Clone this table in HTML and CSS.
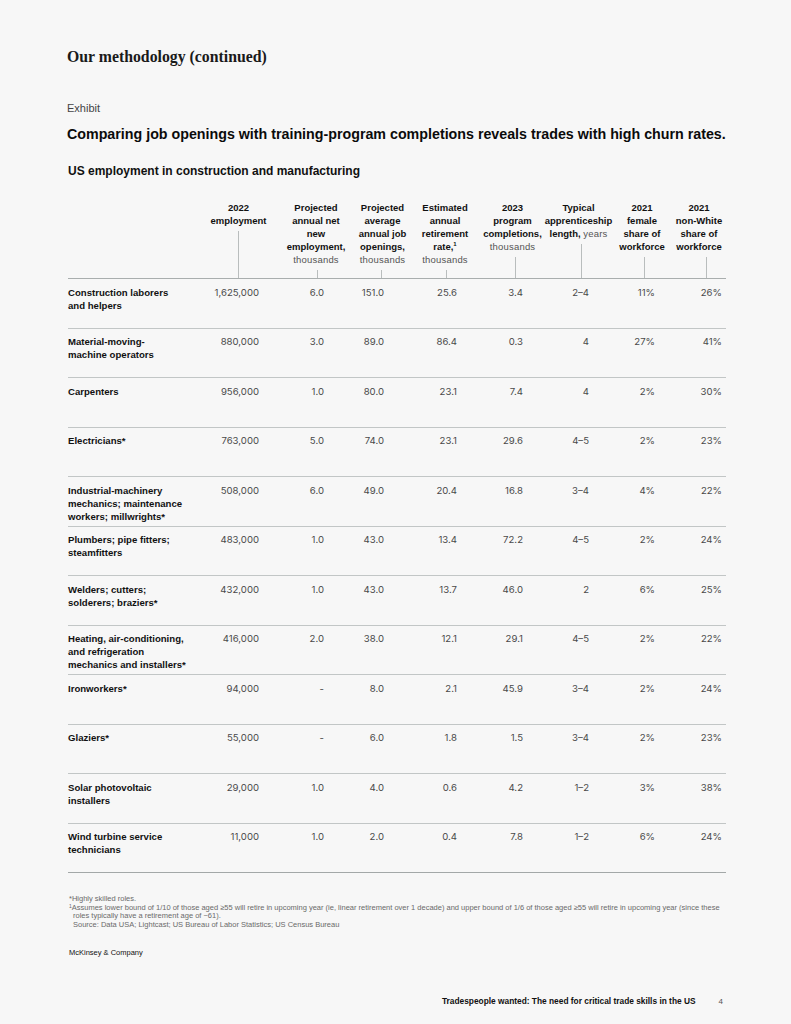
FILE: index.html
```html
<!DOCTYPE html>
<html lang="en">
<head>
<meta charset="utf-8">
<title>Our methodology (continued)</title>
<link rel="stylesheet" href="styles.css">
</head>
<body>
<div class="page">
  <h1 class="title">Our methodology (continued)</h1>
  <div class="exhibit">Exhibit</div>
  <h2 class="heading">Comparing job openings with training-program completions reveals trades with high churn rates.</h2>
  <h3 class="subtitle">US employment in construction and manufacturing</h3>

  <div class="table">
    <div class="thead">
      <div class="hcell hlabel"></div>
      <div class="hcell"><div class="htext">2022<br>employment</div><div class="tick"></div></div>
      <div class="hcell"><div class="htext">Projected<br>annual net<br>new<br>employment,<br><span class="unit">thousands</span></div><div class="tick"></div></div>
      <div class="hcell"><div class="htext">Projected<br>average<br>annual job<br>openings,<br><span class="unit">thousands</span></div><div class="tick"></div></div>
      <div class="hcell"><div class="htext">Estimated<br>annual<br>retirement<br>rate,<sup>1</sup><br><span class="unit">thousands</span></div><div class="tick"></div></div>
      <div class="hcell"><div class="htext">2023<br>program<br>completions,<br><span class="unit">thousands</span></div><div class="tick"></div></div>
      <div class="hcell"><div class="htext">Typical<br>apprenticeship<br>length, <span class="unit">years</span></div><div class="tick"></div></div>
      <div class="hcell"><div class="htext">2021<br>female<br>share of<br>workforce</div><div class="tick"></div></div>
      <div class="hcell"><div class="htext">2021<br>non-White<br>share of<br>workforce</div><div class="tick"></div></div>
    </div>

    <div class="row">
      <div class="label">Construction laborers<br>and helpers</div>
      <div class="val">1,625,000</div><div class="val">6.0</div><div class="val">151.0</div><div class="val">25.6</div><div class="val">3.4</div><div class="val">2–4</div><div class="val">11%</div><div class="val">26%</div>
    </div>
    <div class="row">
      <div class="label">Material-moving-<br>machine operators</div>
      <div class="val">880,000</div><div class="val">3.0</div><div class="val">89.0</div><div class="val">86.4</div><div class="val">0.3</div><div class="val">4</div><div class="val">27%</div><div class="val">41%</div>
    </div>
    <div class="row">
      <div class="label">Carpenters</div>
      <div class="val">956,000</div><div class="val">1.0</div><div class="val">80.0</div><div class="val">23.1</div><div class="val">7.4</div><div class="val">4</div><div class="val">2%</div><div class="val">30%</div>
    </div>
    <div class="row">
      <div class="label">Electricians*</div>
      <div class="val">763,000</div><div class="val">5.0</div><div class="val">74.0</div><div class="val">23.1</div><div class="val">29.6</div><div class="val">4–5</div><div class="val">2%</div><div class="val">23%</div>
    </div>
    <div class="row">
      <div class="label">Industrial-machinery<br>mechanics; maintenance<br>workers; millwrights*</div>
      <div class="val">508,000</div><div class="val">6.0</div><div class="val">49.0</div><div class="val">20.4</div><div class="val">16.8</div><div class="val">3–4</div><div class="val">4%</div><div class="val">22%</div>
    </div>
    <div class="row">
      <div class="label">Plumbers; pipe fitters;<br>steamfitters</div>
      <div class="val">483,000</div><div class="val">1.0</div><div class="val">43.0</div><div class="val">13.4</div><div class="val">72.2</div><div class="val">4–5</div><div class="val">2%</div><div class="val">24%</div>
    </div>
    <div class="row">
      <div class="label">Welders; cutters;<br>solderers; braziers*</div>
      <div class="val">432,000</div><div class="val">1.0</div><div class="val">43.0</div><div class="val">13.7</div><div class="val">46.0</div><div class="val">2</div><div class="val">6%</div><div class="val">25%</div>
    </div>
    <div class="row">
      <div class="label">Heating, air-conditioning,<br>and refrigeration<br>mechanics and installers*</div>
      <div class="val">416,000</div><div class="val">2.0</div><div class="val">38.0</div><div class="val">12.1</div><div class="val">29.1</div><div class="val">4–5</div><div class="val">2%</div><div class="val">22%</div>
    </div>
    <div class="row">
      <div class="label">Ironworkers*</div>
      <div class="val">94,000</div><div class="val">-</div><div class="val">8.0</div><div class="val">2.1</div><div class="val">45.9</div><div class="val">3–4</div><div class="val">2%</div><div class="val">24%</div>
    </div>
    <div class="row">
      <div class="label">Glaziers*</div>
      <div class="val">55,000</div><div class="val">-</div><div class="val">6.0</div><div class="val">1.8</div><div class="val">1.5</div><div class="val">3–4</div><div class="val">2%</div><div class="val">23%</div>
    </div>
    <div class="row">
      <div class="label">Solar photovoltaic<br>installers</div>
      <div class="val">29,000</div><div class="val">1.0</div><div class="val">4.0</div><div class="val">0.6</div><div class="val">4.2</div><div class="val">1–2</div><div class="val">3%</div><div class="val">38%</div>
    </div>
    <div class="row row-last">
      <div class="label">Wind turbine service<br>technicians</div>
      <div class="val">11,000</div><div class="val">1.0</div><div class="val">2.0</div><div class="val">0.4</div><div class="val">7.8</div><div class="val">1–2</div><div class="val">6%</div><div class="val">24%</div>
    </div>
  </div>

  <div class="notes">
    <p>*Highly skilled roles.</p>
    <p><sup>1</sup>Assumes lower bound of 1/10 of those aged ≥55 will retire in upcoming year (ie, linear retirement over 1 decade) and upper bound of 1/6 of those aged ≥55 will retire in upcoming year (since these</p>
    <p class="indent">roles typically have a retirement age of ~61).</p>
    <p class="indent">Source: Data USA; Lightcast; US Bureau of Labor Statistics; US Census Bureau</p>
  </div>

  <div class="brand">McKinsey &amp; Company</div>

  <div class="footer">
    <span class="doc">Tradespeople wanted: The need for critical trade skills in the US</span>
    <span class="pnum">4</span>
  </div>
</div>
</body>
</html>
```

FILE: styles.css
```css
html, body {
  margin: 0;
  padding: 0;
  background: #f7f7f7;
}

body {
  font-family: "Liberation Sans", Arial, sans-serif;
  color: #111;
}

.page {
  width: 791px;
  height: 1024px;
  box-sizing: border-box;
  padding: 47px 0 0 67px;
}

.title {
  margin: 0;
  font-family: "Liberation Serif", "Times New Roman", serif;
  font-weight: 700;
  font-size: 15.8px;
  line-height: 20px;
  color: #1a1a1a;
}

.exhibit {
  margin-top: 34px;
  font-size: 11px;
  line-height: 14px;
  color: #444;
}

.heading {
  margin: 10px 0 0;
  font-size: 14.25px;
  line-height: 18px;
  font-weight: 700;
  color: #0b0b0b;
}

.subtitle {
  margin: 20px 0 0 1px;
  font-size: 12px;
  line-height: 16px;
  font-weight: 700;
  color: #111;
}

/* table */
.table {
  margin-top: 22px;
  margin-left: 1px;
  width: 658px;
}

.thead,
.row {
  display: grid;
  grid-template-columns: 132px 77px 78px 55px 70px 65px 67px 60px 54px;
}

.thead {
  height: 77px;
  border-bottom: 1px solid #a9aeae;
}

.hcell {
  display: flex;
  flex-direction: column;
  align-items: center;
  min-width: 0;
}

.htext {
  font-size: 9.5px;
  line-height: 13px;
  font-weight: 700;
  text-align: center;
  white-space: nowrap;
  color: #111;
}

.htext sup {
  font-size: 6px;
  line-height: 0;
  vertical-align: 4px;
}

.unit {
  font-weight: 400;
  color: #555;
  letter-spacing: 0.2px;
}

.tick {
  flex: 1;
  width: 1px;
  margin-top: 4px;
  background: #b9bdbd;
}

.hcell:nth-child(3) .tick { transform: translateX(1px); }
.hcell:nth-child(4) .tick { transform: translateX(-1px); }
.hcell:nth-child(5) .tick { transform: translateX(1px); }
.hcell:nth-child(6) .tick { transform: translateX(3px); }
.hcell:nth-child(7) .tick { transform: translateX(3px); }
.hcell:nth-child(8) .tick { transform: translateX(2px); }
.hcell:nth-child(9) .tick { transform: translateX(7px); }

.row {
  height: 49.5px;
  box-sizing: border-box;
  padding-top: 6.5px;
  border-bottom: 1px solid #c2c6c6;
}

.row-last {
  border-bottom-color: #a3a8a8;
}

.label {
  font-size: 9.6px;
  line-height: 13px;
  font-weight: 700;
  color: #111;
  white-space: nowrap;
}

.val {
  font-family: Inter, "Liberation Sans", sans-serif;
  font-size: 9.6px;
  line-height: 13px;
  color: #4a4a4a;
  text-align: right;
  font-variant-numeric: proportional-nums;
  white-space: nowrap;
}

.val:nth-child(2) { padding-right: 18px; }
.val:nth-child(3) { padding-right: 31px; }
.val:nth-child(4) { padding-right: 26px; }
.val:nth-child(5) { padding-right: 23px; }
.val:nth-child(6) { padding-right: 22px; }
.val:nth-child(7) { padding-right: 23px; }
.val:nth-child(8) { padding-right: 17px; }
.val:nth-child(9) { padding-right: 4px; }

/* notes */
.notes {
  margin-top: 22px;
  margin-left: 2px;
  font-size: 7.5px;
  line-height: 8.6px;
  color: #6a6a6a;
}

.notes p {
  margin: 0;
  white-space: nowrap;
}

.notes sup {
  font-size: 5px;
  line-height: 0;
  vertical-align: 2px;
}

.notes .indent {
  padding-left: 4px;
}

.brand {
  margin-top: 19px;
  margin-left: 2px;
  font-size: 7.5px;
  line-height: 10px;
  color: #111;
}

.footer {
  margin-top: 38px;
  display: flex;
  justify-content: flex-end;
  align-items: baseline;
  gap: 23px;
  padding-right: 68px;
}

.doc {
  font-size: 8.35px;
  line-height: 10px;
  font-weight: 700;
  color: #111;
}

.pnum {
  font-size: 8px;
  line-height: 10px;
  color: #555;
}
```
